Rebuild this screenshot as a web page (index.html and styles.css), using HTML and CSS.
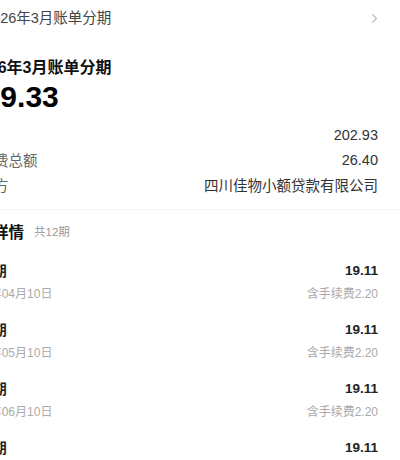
FILE: index.html
```html
<!DOCTYPE html>
<html lang="zh-CN">
<head>
<meta charset="utf-8">
<title>账单分期</title>
<link rel="stylesheet" href="styles.css">
</head>
<body>
<div class="page">
  <div class="topbar">
    <span class="topbar-title">2026年3月账单分期</span>
    <svg class="chev" width="7" height="11" viewBox="0 0 7 11"><path d="M1.5 1.5 L5.5 5.5 L1.5 9.5" fill="none" stroke="#bbb" stroke-width="1.2"/></svg>
  </div>
  <div class="card">
    <div class="title">2026年3月账单分期</div>
    <div class="amount">229.33</div>
    <div class="rows">
      <div class="row"><span class="label">本金</span><span class="value">202.93</span></div>
      <div class="row"><span class="label">手续费总额</span><span class="value">26.40</span></div>
      <div class="row"><span class="label">资金方</span><span class="value">四川佳物小额贷款有限公司</span></div>
    </div>
  </div>
  <div class="divider"></div>
  <div class="section">
    <div class="section-head"><span class="section-title">分期详情</span><span class="section-sub">共12期</span></div>
    <div class="item">
      <div class="item-line"><span class="item-name">第1期</span><span class="item-amt">19.11</span></div>
      <div class="item-line sub"><span class="item-date">2026年04月10日</span><span class="item-fee">含手续费2.20</span></div>
    </div>
    <div class="item">
      <div class="item-line"><span class="item-name">第2期</span><span class="item-amt">19.11</span></div>
      <div class="item-line sub"><span class="item-date">2026年05月10日</span><span class="item-fee">含手续费2.20</span></div>
    </div>
    <div class="item">
      <div class="item-line"><span class="item-name">第3期</span><span class="item-amt">19.11</span></div>
      <div class="item-line sub"><span class="item-date">2026年06月10日</span><span class="item-fee">含手续费2.20</span></div>
    </div>
    <div class="item">
      <div class="item-line"><span class="item-name">第4期</span><span class="item-amt">19.11</span></div>
      <div class="item-line sub"><span class="item-date">2026年07月10日</span><span class="item-fee">含手续费2.20</span></div>
    </div>
  </div>
</div>
</body>
</html>
```

FILE: styles.css
```css
html, body {
  margin: 0;
  padding: 0;
  background: #fff;
  overflow: hidden;
}
body {
  width: 400px;
  height: 460px;
  font-family: "Liberation Sans", "Noto Sans CJK SC", sans-serif;
  color: #222;
}
.page {
  margin-left: -29px;
  width: 429px;
}
.topbar {
  height: 36px;
  display: flex;
  align-items: center;
  justify-content: space-between;
  padding-left: 13px;
  padding-right: 22px;
}
.topbar-title {
  font-size: 14.5px;
  color: #444;
  line-height: 20px;
}
.chev {
  display: block;
}
.card {
  padding-top: 22px;
  padding-right: 22px;
}
.title {
  font-size: 16px;
  font-weight: bold;
  line-height: 20px;
  color: #111;
}
.amount {
  font-size: 30px;
  font-weight: bold;
  line-height: 38px;
  color: #000;
  margin-left: -4px;
}
.rows {
  margin-top: 6px;
}
.row {
  display: flex;
  justify-content: space-between;
  align-items: center;
  height: 25px;
  font-size: 14.5px;
}
.label {
  color: #666;
  margin-left: -6px;
}
.value {
  color: #333;
}
.divider {
  margin-top: 12px;
  margin-left: 29px;
  height: 1px;
  background: #f5f5f5;
}
.section {
  padding-top: 11px;
  padding-right: 22px;
}
.section-head {
  display: flex;
  align-items: center;
  gap: 10px;
  height: 20px;
  margin-left: -9px;
}
.section-title {
  font-size: 15.5px;
  font-weight: bold;
  color: #111;
}
.section-sub {
  font-size: 11.5px;
  color: #999;
}
.item {
  padding-top: 19px;
  height: 41px;
}
.item + .item {
  padding-top: 18px;
}
.item-line {
  display: flex;
  justify-content: space-between;
  align-items: center;
  height: 20px;
}
.item-line.sub {
  margin-top: 2px;
}
.item-name {
  font-size: 14px;
  font-weight: bold;
  color: #222;
}
.item-amt {
  font-size: 13.5px;
  font-weight: bold;
  color: #222;
}
.item-date {
  font-size: 12px;
  color: #aaa;
  margin-left: -8px;
}
.item-fee {
  font-size: 12px;
  color: #aaa;
}
```
